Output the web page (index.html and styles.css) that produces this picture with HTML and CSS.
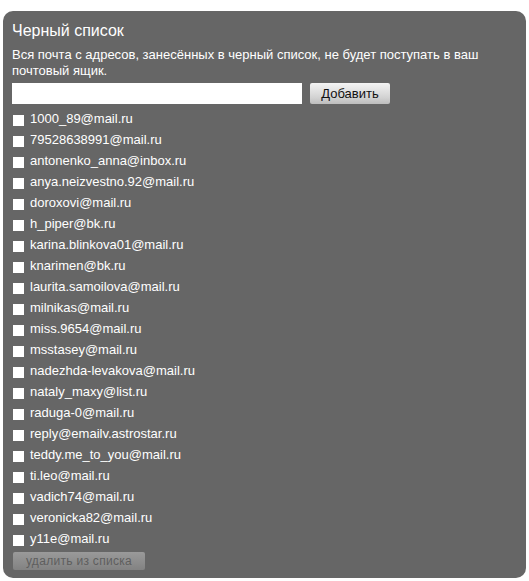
FILE: index.html
```
<!DOCTYPE html>
<html lang="ru">
<head>
<meta charset="utf-8">
<link rel="stylesheet" href="styles.css">
</head>
<body>
<div class="panel">
  <h1 class="title">Черный список</h1>
  <p class="desc">Вся почта с адресов, занесённых в черный список, не будет поступать в ваш почтовый ящик.</p>
  <div class="addrow">
    <div class="field"></div>
    <div class="btn">Добавить</div>
  </div>
  <ul class="list">
    <li><span class="cb"></span>1000_89@mail.ru</li>
    <li><span class="cb"></span>79528638991@mail.ru</li>
    <li><span class="cb"></span>antonenko_anna@inbox.ru</li>
    <li><span class="cb"></span>anya.neizvestno.92@mail.ru</li>
    <li><span class="cb"></span>doroxovi@mail.ru</li>
    <li><span class="cb"></span>h_piper@bk.ru</li>
    <li><span class="cb"></span>karina.blinkova01@mail.ru</li>
    <li><span class="cb"></span>knarimen@bk.ru</li>
    <li><span class="cb"></span>laurita.samoilova@mail.ru</li>
    <li><span class="cb"></span>milnikas@mail.ru</li>
    <li><span class="cb"></span>miss.9654@mail.ru</li>
    <li><span class="cb"></span>msstasey@mail.ru</li>
    <li><span class="cb"></span>nadezhda-levakova@mail.ru</li>
    <li><span class="cb"></span>nataly_maxy@list.ru</li>
    <li><span class="cb"></span>raduga-0@mail.ru</li>
    <li><span class="cb"></span>reply@emailv.astrostar.ru</li>
    <li><span class="cb"></span>teddy.me_to_you@mail.ru</li>
    <li><span class="cb"></span>ti.leo@mail.ru</li>
    <li><span class="cb"></span>vadich74@mail.ru</li>
    <li><span class="cb"></span>veronicka82@mail.ru</li>
    <li><span class="cb"></span>y11e@mail.ru</li>
  </ul>
  <div class="del">удалить из списка</div>
</div>
</body>
</html>
```
FILE: styles.css
```
html, body {
  margin: 0;
  padding: 0;
  background: #ffffff;
}
body {
  font-family: "Liberation Sans", Arial, sans-serif;
}
.panel {
  box-sizing: border-box;
  margin: 11px 3px 0 3px;
  height: 567px;
  background: #666666;
  border-radius: 10px;
  padding: 10px 9px 0 9px;
  color: #ffffff;
}
.title {
  margin: 0;
  font-size: 16px;
  font-weight: normal;
  line-height: 20px;
}
.desc {
  margin: 6px 0 0 0;
  font-size: 13px;
  line-height: 16px;
}
.addrow {
  display: flex;
  gap: 8px;
  margin-top: 4px;
  height: 21px;
}
.field {
  width: 290px;
  height: 21px;
  background: #ffffff;
}
.btn {
  width: 80px;
  height: 21px;
  box-sizing: border-box;
  border-radius: 2px;
  background: linear-gradient(#f4f4f4, #d2d2d2 70%, #bdbdbd);
  color: #111;
  font-size: 13px;
  line-height: 21px;
  text-align: center;
}
.list {
  list-style: none;
  margin: 6px 0 0 0;
  padding: 0;
}
.list li {
  display: flex;
  align-items: flex-start;
  height: 21px;
  line-height: 17px;
  font-size: 13px;
}
.cb {
  width: 11px;
  height: 11px;
  background: #ffffff;
  margin: 5px 6px 0 1px;
  flex: none;
}
.del {
  margin: 1px 0 0 1px;
  width: 132px;
  height: 18px;
  box-sizing: border-box;
  border-radius: 2px;
  background: linear-gradient(#9a9a9a, #828282);
  color: #5e5e5e;
  font-size: 12px;
  line-height: 18px;
  text-align: center;
  letter-spacing: 0.3px;
}
```
